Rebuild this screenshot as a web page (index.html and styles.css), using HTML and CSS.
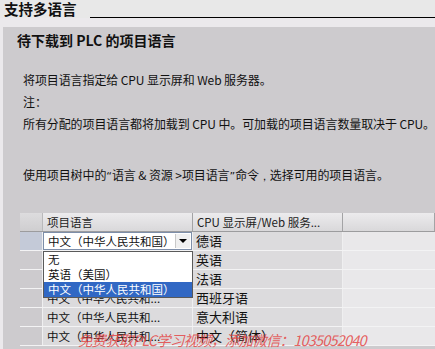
FILE: index.html
```html
<!DOCTYPE html>
<html>

<head>
    <title>支持多语言</title>
    <link rel="stylesheet" href="styles.css">
</head>

<body>
    <div class="titlebar">
        <span class="title">支持多语言</span>
        <span class="rule"></span>
    </div>
    <div class="frame">
        <div class="panel">
            <h2>待下载到 PLC 的项目语言</h2>
            <div class="desc">
                <div class="line">将项目语言指定给 CPU 显示屏和 Web 服务器。</div>
                <div class="line">注：</div>
                <div class="line">所有分配的项目语言都将加载到 CPU 中。可加载的项目语言数量取决于 CPU。</div>
                <div class="blank"></div>
                <div class="line">使用项目树中的<span class="q">“</span>语言 &amp; 资源 &gt;项目语言<span class="q">”</span>命令<span class="q">，</span>选择可用的项目语言。</div>
            </div>

            <div class="grid">
                <div class="row head">
                    <div class="cell rh"></div>
                    <div class="cell">项目语言</div>
                    <div class="cell">CPU 显示屏/Web 服务...</div>
                    <div class="cell last"></div>
                </div>
                <div class="row">
                    <div class="cell rh sel"></div>
                    <div class="cell combo-cell">
                        <div class="combo">
                            <span class="combo-text">中文（中华人民共和国）</span>
                            <span class="combo-btn"><span class="arrow"></span></span>
                        </div>
                    </div>
                    <div class="cell val">德语</div>
                    <div class="cell last"></div>
                </div>
                <div class="row">
                    <div class="cell rh"></div>
                    <div class="cell lang">中文（中华人民共和...</div>
                    <div class="cell val">英语</div>
                    <div class="cell last"></div>
                </div>
                <div class="row">
                    <div class="cell rh"></div>
                    <div class="cell lang">中文（中华人民共和...</div>
                    <div class="cell val">法语</div>
                    <div class="cell last"></div>
                </div>
                <div class="row">
                    <div class="cell rh"></div>
                    <div class="cell lang">中文（中华人民共和...</div>
                    <div class="cell val">西班牙语</div>
                    <div class="cell last"></div>
                </div>
                <div class="row">
                    <div class="cell rh"></div>
                    <div class="cell lang">中文（中华人民共和...</div>
                    <div class="cell val">意大利语</div>
                    <div class="cell last"></div>
                </div>
                <div class="row">
                    <div class="cell rh"></div>
                    <div class="cell lang">中文（中华人民共和...</div>
                    <div class="cell val">中文（简体）</div>
                    <div class="cell last"></div>
                </div>

                <!-- open dropdown of the first row -->
                <ul class="dropdown">
                    <li>无</li>
                    <li>英语（美国）</li>
                    <li class="active">中文（中华人民共和国）</li>
                </ul>
            </div>
        </div>
    </div>
    <div class="watermark">免费获取PLC学习视频，添加微信：1035052040</div>
</body>

</html>
```

FILE: styles.css
```css
body {
    margin: 0;
    width: 435px;
    height: 349px;
    overflow: hidden;
    position: relative;
    background-color: #ebe9ec;
    font-family: "Noto Sans CJK SC", sans-serif;
    color: #111;
}

.titlebar {
    display: flex;
    align-items: flex-end;
    height: 18px;
    background-color: #e8e8e8;
    padding-left: 4px;
}

.title {
    font-size: 14.5px;
    font-weight: bold;
    line-height: 18px;
}

.rule {
    flex: 1;
    height: 1px;
    background-color: #000;
    margin-left: 13px;
}

.frame {
    padding-top: 9px;
    padding-left: 3px;
}

.panel {
    background-color: #cdcbce;
    height: 322px;
    padding-top: 4px;
}

h2 {
    margin: 0 0 0 14px;
    font-size: 14px;
    line-height: 18px;
    font-weight: bold;
}

.desc {
    margin: 20px 0 0 20px;
    font-size: 12px;
    letter-spacing: -0.1px;
}

.line {
    height: 22px;
    line-height: 22px;
    white-space: nowrap;
}

.q {
    font-family: "DejaVu Sans", sans-serif;
    font-size: 11px;
}

.blank {
    height: 29px;
}

.grid {
    position: relative;
    margin: 27px 0 0 17px;
    font-size: 12px;
}

.row {
    display: grid;
    grid-template-columns: 23px 150px 150px 1fr;
    height: 19px;
    border-bottom: 1px solid #f3f3f4;
    box-sizing: border-box;
}

.cell {
    background-color: #dcdbdd;
    border-right: 1px solid #efeff0;
    line-height: 18px;
    padding-left: 4px;
    white-space: nowrap;
    overflow: hidden;
}

.cell.lang {
    font-size: 11.5px;
}

.cell.val {
    font-size: 13px;
    padding-left: 3px;
}

.cell.last {
    background-color: #e9e8ea;
    border-right: none;
}

.cell.rh {
    background-color: #cdcbce;
    padding: 0;
}

.cell.rh.sel {
    background-color: #c4cad8;
}

.row.head {
    border-bottom: 1px solid #9c9c9e;
}

.row.head .cell {
    background: linear-gradient(#ecebed, #d9d8da);
    border-right: 1px solid #a3a3a5;
    color: #222;
    font-size: 11.5px;
}

.row.head .cell.rh {
    background: linear-gradient(#dddcde, #cfced0);
    border-right: 1px solid #b9b9bb;
}

.cell.combo-cell {
    padding: 0;
    background-color: #dcdbdd;
}

.combo {
    display: flex;
    align-items: center;
    height: 18px;
    background-color: #fff;
    border: 1px solid #7d8ea9;
    box-sizing: border-box;
    padding-left: 4px;
    font-size: 11.5px;
}

.combo-text {
    flex: 1;
}

.combo-btn {
    display: flex;
    align-items: center;
    justify-content: center;
    width: 15px;
    height: 14px;
    margin-right: 1px;
    background-color: #f0f0f0;
    border-left: 1px solid #c9c9c9;
}

.arrow {
    width: 0;
    height: 0;
    border-left: 4px solid transparent;
    border-right: 4px solid transparent;
    border-top: 4px solid #000;
}

.dropdown {
    position: absolute;
    left: 23px;
    top: 38px;
    width: 150px;
    margin: 0;
    padding: 0;
    list-style: none;
    background-color: #fff;
    border: 1px solid #5a5a5a;
    box-sizing: border-box;
    font-size: 11.5px;
}

.dropdown li {
    height: 15px;
    line-height: 15px;
    padding-left: 4px;
    white-space: nowrap;
}

.dropdown li.active {
    background-color: #3168c4;
    color: #fff;
}

.watermark {
    position: absolute;
    left: 78px;
    top: 331px;
    font-size: 14.5px;
    font-style: italic;
    letter-spacing: -0.8px;
    line-height: 17px;
    color: rgba(228, 60, 60, 0.8);
    white-space: nowrap;
}
```
